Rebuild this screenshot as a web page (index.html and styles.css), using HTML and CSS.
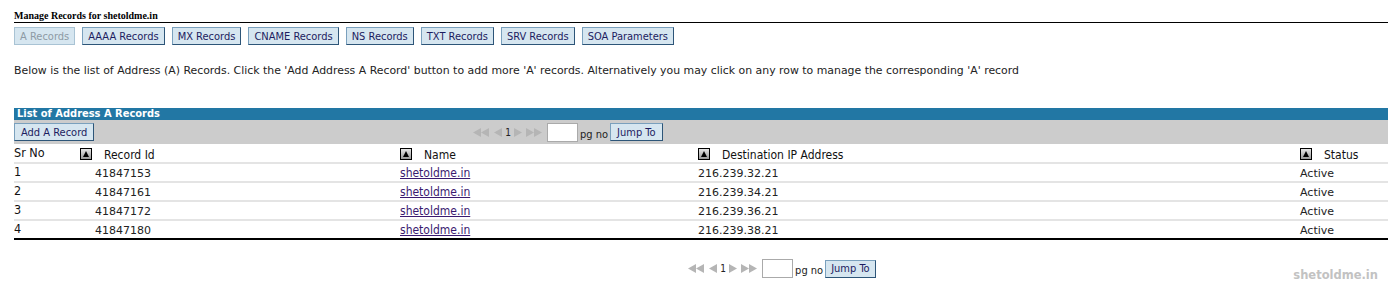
FILE: index.html
```html
<!DOCTYPE html>
<html lang="en">
<head>
  <meta charset="UTF-8" />
  <title>Manage Records</title>
  <link rel="stylesheet" href="styles.css">
</head>
<body>
  <main class="page">
    <h1 class="title">Manage Records for shetoldme.in</h1>

    <nav class="tabs">
      <button class="btn disabled">A Records</button>
      <button class="btn">AAAA Records</button>
      <button class="btn">MX Records</button>
      <button class="btn">CNAME Records</button>
      <button class="btn">NS Records</button>
      <button class="btn">TXT Records</button>
      <button class="btn">SRV Records</button>
      <button class="btn">SOA Parameters</button>
    </nav>

    <p class="intro">Below is the list of Address (A) Records. Click the 'Add Address A Record' button to add more 'A' records. Alternatively you may click on any row to manage the corresponding 'A' record</p>

    <section class="list">
      <div class="list-head">List of Address A Records</div>
      <div class="toolbar">
        <button class="btn">Add A Record</button>
        <div class="pager top"></div>
      </div>

      <table class="records">
        <thead>
          <tr>
            <th class="c1">Sr No</th>
            <th class="c2"><span class="sort"></span>Record Id</th>
            <th class="c3"><span class="sort"></span>Name</th>
            <th class="c4"><span class="sort"></span>Destination IP Address</th>
            <th class="c5"><span class="sort"></span>Status</th>
          </tr>
        </thead>
        <tbody id="record-list"></tbody>
      </table>

      <div class="pager bottom"></div>
    </section>

    <div class="mark">shetoldme.in</div>
  </main>

  <script>
    document.addEventListener("DOMContentLoaded", () => {
      const records = [
        { id: 41847153, name: "shetoldme.in", ip: "216.239.32.21", status: "Active" },
        { id: 41847161, name: "shetoldme.in", ip: "216.239.34.21", status: "Active" },
        { id: 41847172, name: "shetoldme.in", ip: "216.239.36.21", status: "Active" },
        { id: 41847180, name: "shetoldme.in", ip: "216.239.38.21", status: "Active" }
      ];

      const list = document.getElementById("record-list");
      records.forEach((r, i) => {
        const row = document.createElement("tr");
        row.innerHTML = `<td class="sr">${i + 1}</td><td class="rid">${r.id}</td><td><a href="#">${r.name}</a></td><td>${r.ip}</td><td>${r.status}</td>`;
        list.appendChild(row);
      });

      const arrow = (d) => `<svg width="${d.length > 1 ? 17 : 9}" height="9" viewBox="0 0 ${d.length > 1 ? 17 : 9} 9">${d.map(p => `<path d="${p}" fill="#b5b5b5"/>`).join("")}</svg>`;

      const pagerHtml = `
        <span class="arrows">
          ${arrow(["M0 4.5 L8 0 L8 9 Z", "M8 4.5 L16 0 L16 9 Z"])}
          ${arrow(["M1 4.5 L9 0 L9 9 Z"])}
          <span class="num">1</span>
          ${arrow(["M0 0 L8 4.5 L0 9 Z"])}
          ${arrow(["M0 0 L8 4.5 L0 9 Z", "M8 0 L16 4.5 L8 9 Z"])}
        </span>
        <input type="text" class="pgbox" />
        <span class="pgno">pg no</span>
        <button class="btn">Jump To</button>`;

      document.querySelectorAll(".pager").forEach(p => p.innerHTML = pagerHtml);
    });
  </script>
</body>
</html>
```

FILE: styles.css
```css
* {
  box-sizing: border-box;
}

body {
  margin: 0;
  padding: 0;
  background: #fff;
  color: #222;
  font-family: 'DejaVu Sans', sans-serif;
  font-size: 11px;
}

.page {
  padding: 11px 0 0 14px;
  position: relative;
  height: 293px;
}

.title {
  margin: 0;
  font-family: 'Liberation Serif', serif;
  font-size: 10px;
  font-weight: bold;
  color: #000;
  line-height: 10px;
  padding-bottom: 1px;
  border-bottom: 1px solid #000;
}

.tabs {
  display: flex;
  gap: 7px;
  margin-top: 4px;
}

.btn {
  font-family: 'DejaVu Sans Condensed', 'DejaVu Sans', sans-serif;
  font-size: 11px;
  height: 18px;
  padding: 0 5px;
  background: #d6e6f0;
  color: #1c1c60;
  border: 1px solid #7aa0bd;
  border-right-color: #2d5578;
  border-bottom-color: #2d5578;
  cursor: pointer;
}

.btn.disabled {
  color: #8d9aa4;
  border-color: #a9c3d4;
}

.intro {
  margin: 18px 0 0;
  line-height: 16px;
  font-size: 10.9px;
  color: #222;
}

.list {
  margin-top: 29px;
}

.list-head {
  background: #2277a4;
  color: #fff;
  font-family: 'DejaVu Sans Condensed', 'DejaVu Sans', sans-serif;
  font-weight: bold;
  height: 12px;
  line-height: 12px;
  padding-left: 3px;
}

.toolbar {
  background: #cccccc;
  height: 24px;
  display: flex;
  align-items: center;
}

.toolbar .btn {
  padding: 0 6px;
}

.pager {
  display: flex;
  align-items: center;
  gap: 2px;
  font-family: 'DejaVu Sans Condensed', 'DejaVu Sans', sans-serif;
}

.pager.top {
  margin-left: 379px;
}

.pager.bottom {
  justify-content: center;
  margin-top: 19px;
  padding-left: 162px;
}

.arrows {
  display: flex;
  align-items: center;
  gap: 3px;
  margin-right: 2px;
}

.num {
  color: #222;
  font-size: 10px;
}

.pgbox {
  width: 31px;
  height: 19px;
  border: 1px solid #aaa;
  background: #fff;
  margin: 0;
  padding: 0;
}

.pgno {
  align-self: flex-end;
  line-height: 12px;
  margin-bottom: 1px;
  color: #222;
}

.records {
  width: 1374px;
  border-collapse: collapse;
  margin-top: 1px;
  border-bottom: 2px solid #000;
}

.records th {
  font-family: 'DejaVu Sans Condensed', 'DejaVu Sans', sans-serif;
  font-weight: normal;
  text-align: left;
  padding: 2px 0 0;
  height: 18px;
  border-bottom: 2px solid #e4e4e4;
  color: #111;
  font-size: 12px;
}

.records th.c1 {
  font-size: 12.5px;
  vertical-align: top;
  padding-top: 0;
}

.sort {
  display: inline-block;
  width: 12px;
  height: 12px;
  border: 1px solid #000;
  background: linear-gradient(#e6e6e6, #9a9a9a);
  vertical-align: -1px;
  margin-right: 12px;
  position: relative;
}

.sort::after {
  content: "";
  position: absolute;
  left: 2px;
  top: 2px;
  border-left: 3px solid transparent;
  border-right: 3px solid transparent;
  border-bottom: 6px solid #000;
}

.c1 { width: 66px; }
.c2 { width: 320px; }
.c3 { width: 298px; }
.c4 { width: 602px; }

.records td {
  height: 19px;
  padding: 1px 0 0;
  border-bottom: 2px solid #e4e4e4;
  color: #222;
}

.records tr:last-child td {
  border-bottom: none;
}

.records td.sr {
  font-family: 'DejaVu Sans Condensed', 'DejaVu Sans', sans-serif;
  font-size: 12.5px;
  vertical-align: top;
  padding-top: 0;
  color: #111;
}

.records td.rid {
  padding-left: 15px;
}

.records a {
  font-family: 'DejaVu Sans Condensed', 'DejaVu Sans', sans-serif;
  color: #3a1a70;
  font-size: 12px;
}

.mark {
  position: absolute;
  right: 10px;
  bottom: 11px;
  color: #c2c2c2;
  font-weight: bold;
  font-size: 11.5px;
}
```
